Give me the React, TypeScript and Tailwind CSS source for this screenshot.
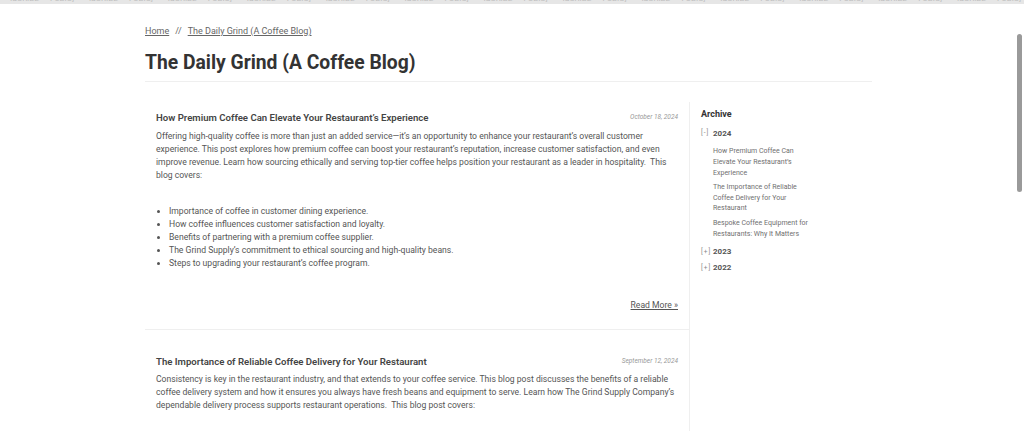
import React from "react";

const posts = [
  {
    title: "How Premium Coffee Can Elevate Your Restaurant’s Experience",
    date: "October 18, 2024",
    body: "Offering high-quality coffee is more than just an added service—it’s an opportunity to enhance your restaurant’s overall customer experience. This post explores how premium coffee can boost your restaurant’s reputation, increase customer satisfaction, and even improve revenue. Learn how sourcing ethically and serving top-tier coffee helps position your restaurant as a leader in hospitality.\u00a0 This blog covers:",
    bullets: [
      "Importance of coffee in customer dining experience.",
      "How coffee influences customer satisfaction and loyalty.",
      "Benefits of partnering with a premium coffee supplier.",
      "The Grind Supply’s commitment to ethical sourcing and high-quality beans.",
      "Steps to upgrading your restaurant’s coffee program.",
    ],
  },
  {
    title: "The Importance of Reliable Coffee Delivery for Your Restaurant",
    date: "September 12, 2024",
    body: "Consistency is key in the restaurant industry, and that extends to your coffee service. This blog post discusses the benefits of a reliable coffee delivery system and how it ensures you always have fresh beans and equipment to serve. Learn how The Grind Supply Company’s dependable delivery process supports restaurant operations.\u00a0 This blog post covers:",
    bullets: [
      "Why consistent coffee supply matters for restaurants.",
      "Common challenges with coffee delivery.",
    ],
  },
];

const archiveLinks = [
  "How Premium Coffee Can Elevate Your Restaurant’s Experience",
  "The Importance of Reliable Coffee Delivery for Your Restaurant",
  "Bespoke Coffee Equipment for Restaurants: Why It Matters",
];

function TopStrip() {
  const items = Array.from({ length: 13 });
  return (
    <div className="h-[4px] bg-[#e6e6e6] overflow-hidden">
      <div className="flex -mt-[6px] pl-[10px] gap-[12px] whitespace-nowrap text-[8px] leading-[10px] text-[#bdbdbd]">
        {items.map((_, i) => (
          <React.Fragment key={i}>
            <span className="w-[28px]">ISCRIBE</span>
            <span className="w-[27px]">FUBIC]</span>
          </React.Fragment>
        ))}
      </div>
    </div>
  );
}

function Year({ sign, year }: { sign: string; year: string }) {
  return (
    <div className="flex items-center h-[12px] text-[8px]">
      <span className="text-[#888] w-[12px] text-[6.5px] tracking-[1px]">[{sign}]</span>
      <span className="font-bold text-[#555]">{year}</span>
    </div>
  );
}

export default function App() {
  return (
    <div
      className="relative h-[431px] overflow-hidden bg-white text-[#555]"
      style={{ fontFamily: "Roboto, 'Noto Sans', sans-serif" }}
    >
      <TopStrip />
      <div className="w-[727px] ml-[145px]">
        <div className="pt-[20px] text-[9px] leading-[14px] text-[#666]">
          <a className="underline">Home</a>
          <span className="mx-[6px]">//</span>
          <a className="underline">The Daily Grind (A Coffee Blog)</a>
        </div>
        <h1 className="mt-[12px] text-[19.3px] leading-[26px] font-bold text-[#333] pb-[5px] border-b border-[#efefef]">
          The Daily Grind (A Coffee Blog)
        </h1>
        <div className="flex mt-[20px]">
          <main className="w-[544px] shrink-0">
            {posts.map((p, i) => (
              <article
                key={i}
                className={
                  i === 0
                    ? "px-[11px] pt-[9px] pb-[17px] border-b border-[#efefef]"
                    : "px-[11px] pt-[25px]"
                }
              >
                <div className="flex items-center justify-between">
                  <h2 className="text-[9.6px] leading-[14px] font-semibold text-[#444]">{p.title}</h2>
                  <span className="text-[6.5px] italic text-[#999]">{p.date}</span>
                </div>
                <p className="mt-[4.5px] text-[8.6px] leading-[13px] text-[#555]">{p.body}</p>
                <ul className="mt-[23px] pl-[13px] list-disc text-[8.6px] leading-[13px] text-[#555] marker:text-[#555]">
                  {p.bullets.map((b) => (
                    <li key={b}>{b}</li>
                  ))}
                </ul>
                <div className="mt-[29px] flex justify-end text-[8.6px] leading-[13px]">
                  <a className="underline text-[#555]">Read More »</a>
                </div>
              </article>
            ))}
          </main>
          <aside className="flex-1 border-l border-[#efefef] pl-[11px] pt-[6px] min-h-[340px]">
            <h3 className="text-[9px] leading-[12px] font-bold text-[#333]">Archive</h3>
            <div className="mt-[8px]">
              <Year sign="-" year="2024" />
            </div>
            <ul className="mt-[6px] pl-[12px] flex flex-col gap-[3.5px]">
              {archiveLinks.map((l) => (
                <li key={l} className="w-[98px] text-[7px] leading-[10.8px] text-[#707070]">
                  {l}
                </li>
              ))}
            </ul>
            <div className="mt-[7px]">
              <Year sign="+" year="2023" />
            </div>
            <div className="mt-[4px]">
              <Year sign="+" year="2022" />
            </div>
          </aside>
        </div>
      </div>
      <div className="absolute left-[1017px] top-[34px] w-[5px] h-[158px] rounded-full bg-[#9a9a9a]" />
    </div>
  );
}
